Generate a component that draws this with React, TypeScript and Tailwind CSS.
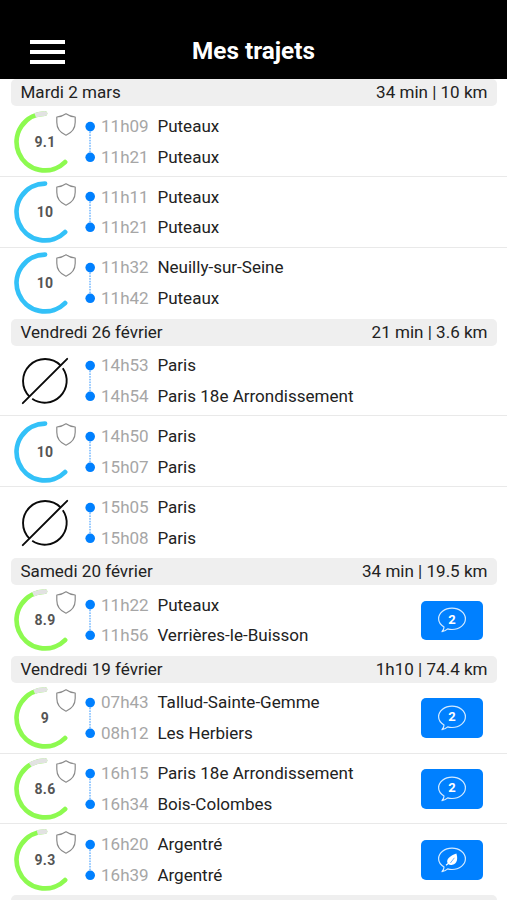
type Trip = {
  score: number | null;
  from: [string, string];
  to: [string, string];
  message?: 'count' | 'leaf';
};

type Day = {
  label: string;
  total: string;
  trips: Trip[];
};

const days: Day[] = [
  {
    label: 'Mardi 2 mars',
    total: '34 min | 10 km',
    trips: [
      { score: 9.1, from: ['11h09', 'Puteaux'], to: ['11h21', 'Puteaux'] },
      { score: 10, from: ['11h11', 'Puteaux'], to: ['11h21', 'Puteaux'] },
      { score: 10, from: ['11h32', 'Neuilly-sur-Seine'], to: ['11h42', 'Puteaux'] },
    ],
  },
  {
    label: 'Vendredi 26 février',
    total: '21 min | 3.6 km',
    trips: [
      { score: null, from: ['14h53', 'Paris'], to: ['14h54', 'Paris 18e Arrondissement'] },
      { score: 10, from: ['14h50', 'Paris'], to: ['15h07', 'Paris'] },
      { score: null, from: ['15h05', 'Paris'], to: ['15h08', 'Paris'] },
    ],
  },
  {
    label: 'Samedi 20 février',
    total: '34 min | 19.5 km',
    trips: [
      { score: 8.9, from: ['11h22', 'Puteaux'], to: ['11h56', 'Verrières-le-Buisson'], message: 'count' },
    ],
  },
  {
    label: 'Vendredi 19 février',
    total: '1h10 | 74.4 km',
    trips: [
      { score: 9, from: ['07h43', 'Tallud-Sainte-Gemme'], to: ['08h12', 'Les Herbiers'], message: 'count' },
      { score: 8.6, from: ['16h15', 'Paris 18e Arrondissement'], to: ['16h34', 'Bois-Colombes'], message: 'count' },
      { score: 9.3, from: ['16h20', 'Argentré'], to: ['16h39', 'Argentré'], message: 'leaf' },
    ],
  },
];

const R = 28.4;

// Point on the ring, angle counted counterclockwise from the top
function point(deg: number) {
  const a = (deg * Math.PI) / 180;
  return `${(31 - R * Math.sin(a)).toFixed(2)} ${(31 - R * Math.cos(a)).toFixed(2)}`;
}

function ScoreRing({ score }: { score: number }) {
  const missing = (1 - score / 10) * 225;

  return (
    <div className="relative w-[62px] h-[62px] flex items-center justify-center">
      <svg className="absolute inset-0" width="62" height="62" viewBox="0 0 62 62" fill="none" strokeWidth="4.8">
        <path
          d={`M${point(0)} A${R} ${R} 0 1 0 ${point(225)}`}
          stroke={score === 10 ? '#33c1f8' : '#8dfa50'}
          strokeLinecap="round"
        />
        {missing > 0.5 && (
          <>
            <path d={`M${point(0)} A${R} ${R} 0 0 0 ${point(missing)}`} stroke="#e2e2e2" />
            <path d={`M${point(0)} h0.01`} stroke="#e2e2e2" strokeLinecap="round" />
          </>
        )}
      </svg>
      <span className="text-[14px] leading-none font-bold tracking-[0.3px] text-[#555]">{score}</span>
      <svg className="absolute left-[42px] top-[2px]" width="20" height="23" viewBox="0 0 20 23" fill="none">
        <path
          d="M10 0.8 C7.2 2.8 4 3.8 0.8 4 V9.2 C0.8 15.2 4 19.6 10 22.2 C16 19.6 19.2 15.2 19.2 9.2 V4 C16 3.8 12.8 2.8 10 0.8 Z"
          stroke="#8a8a8a"
          strokeWidth="1.2"
          strokeLinejoin="round"
        />
      </svg>
    </div>
  );
}

function NoScore() {
  return (
    <svg width="62" height="62" viewBox="0 0 62 62" fill="none" stroke="#0a0a0a" strokeWidth="1.9">
      <path d="M46.7 15.5 A22 22 0 0 0 15.5 46.7" />
      <path d="M18.2 48.8 A22 22 0 0 0 48.8 18.2" />
      <path d="M8.8 53.2 L53.2 8.8" strokeLinecap="round" />
    </svg>
  );
}

function Stops() {
  return (
    <svg width="10" height="42" viewBox="0 0 10 42">
      <path d="M5 8 V34" stroke="#2a92ff" strokeWidth="1" strokeDasharray="1.6 1.1" />
      <circle cx="5.2" cy="5.6" r="4.8" fill="#0080ff" />
      <circle cx="5.2" cy="36.3" r="4.8" fill="#0080ff" />
    </svg>
  );
}

function MessageButton({ kind }: { kind: 'count' | 'leaf' }) {
  return (
    <button className="relative w-[62px] h-[39.5px] rounded-[5px] bg-[#0080ff] flex items-center justify-center">
      <svg width="30" height="28" viewBox="0 0 30 28" fill="none">
        <path
          d="M7 21 C3.8 19 1.6 16 1.6 12.8 C1.6 6.8 7.6 2.1 15 2.1 C22.4 2.1 28.4 6.8 28.4 12.8 C28.4 18.8 22.4 23.5 15 23.5 C13.5 23.5 12 23.3 10.7 22.9 C9 24.4 7.3 25.4 5 25.7 C6.2 24.4 7 22.8 7 21 Z"
          stroke="#d4eaff"
          strokeWidth="1.2"
          strokeLinejoin="round"
        />
        {kind === 'leaf' && (
          <>
            <path d="M19.4 7.4 C14 9.4 10.2 11.8 10.2 15.6 C10.2 18.2 12.8 19.6 15.4 18.8 C20.4 17.2 21 12.6 19.4 7.4 Z" fill="#fff" />
            <path d="M9 19.2 L11.6 17.2" stroke="#fff" strokeWidth="1.2" />
            <path d="M13.4 17 L17.4 11.8" stroke="#0080ff" strokeWidth="0.6" />
          </>
        )}
      </svg>
      {kind === 'count' && (
        <span className="absolute inset-x-0 top-[12px] text-center text-[13px] leading-[14px] font-bold text-white">2</span>
      )}
    </button>
  );
}

function DayHeader({ label, total }: { label: string; total: string }) {
  return (
    <div className="ml-[11px] mr-[10px] h-[27px] px-[9.5px] rounded-[5px] bg-[#efefef] flex items-center justify-between text-[17.05px] leading-none text-[#222]">
      <span>{label}</span>
      <span>{total}</span>
    </div>
  );
}

function TripRow({ trip }: { trip: Trip }) {
  return (
    <li className="h-[70.8px] pt-[1px] pl-[14px] pr-[24px] flex items-center border-b border-[#e9e9e9] last:border-transparent">
      {trip.score === null ? <NoScore /> : <ScoreRing score={trip.score} />}
      <div className="ml-[9px]">
        <Stops />
      </div>
      <div className="ml-[6px] flex-1 text-[17.05px] leading-[30.7px] whitespace-nowrap">
        {[trip.from, trip.to].map(([time, place], i) => (
          <div key={i} className="flex">
            <span className="w-[56.4px] text-[#a6a6a6]">{time}</span>
            <span className="text-[#222]">{place}</span>
          </div>
        ))}
      </div>
      {trip.message && <MessageButton kind={trip.message} />}
    </li>
  );
}

export default function App() {
  return (
    <div className="w-[507px] h-[900px] overflow-hidden bg-white font-['Roboto',sans-serif]">
      <header className="h-[79.2px] bg-black pt-[24px] px-[30px] grid grid-cols-[1fr_auto_1fr] items-center">
        <button className="flex flex-col gap-[6px]" aria-label="Menu">
          <span className="w-[35px] h-[4px] bg-white" />
          <span className="w-[35px] h-[4px] bg-white" />
          <span className="w-[35px] h-[4px] bg-white" />
        </button>
        <h1 className="text-[24.3px] leading-none font-bold text-white">Mes trajets</h1>
      </header>

      <main>
        {days.map((day) => (
          <section key={day.label}>
            <DayHeader label={day.label} total={day.total} />
            <ul>
              {day.trips.map((trip, i) => (
                <TripRow key={i} trip={trip} />
              ))}
            </ul>
          </section>
        ))}
        <DayHeader label="" total="" />
      </main>
    </div>
  );
}
